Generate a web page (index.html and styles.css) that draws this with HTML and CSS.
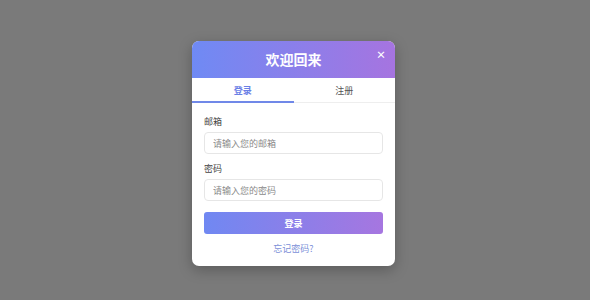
FILE: index.html
```html
<html lang="zh-CN">
<head>
    <meta charset="UTF-8">
    <meta name="viewport" content="width=device-width, initial-scale=1.0">
    <title>登录</title>
    <link rel="stylesheet" href="styles.css">
</head>
<body>
    <div class="mask">
        <div class="modal">
            <div class="modal-head">
                <h2>欢迎回来</h2>
                <span class="close">×</span>
            </div>
            <ul class="tabs">
                <li class="active">登录</li>
                <li>注册</li>
            </ul>
            <div class="modal-body">
                <div class="field">
                    <label>邮箱</label>
                    <input type="text" placeholder="请输入您的邮箱">
                </div>
                <div class="field">
                    <label>密码</label>
                    <input type="password" placeholder="请输入您的密码">
                </div>
                <button class="submit">登录</button>
                <a class="forgot" href="#">忘记密码?</a>
            </div>
        </div>
    </div>
</body>
</html>
```
FILE: styles.css
```css
* {
    margin: 0;
    padding: 0;
    box-sizing: border-box;
    list-style: none;
    text-decoration: none;
}

body {
    font-family: "Noto Sans CJK SC", "Noto Sans", sans-serif;
    background: #7a7a7a;
}

.mask {
    height: 300px;
    display: flex;
    align-items: center;
    justify-content: center;
    padding: 7px 3px 0 0;
}

.modal {
    width: 203px;
    background: #fff;
    border-radius: 7px;
    overflow: hidden;
    box-shadow: 0 4px 14px rgba(0, 0, 0, 0.25);
}

.modal-head {
    height: 37px;
    position: relative;
    display: flex;
    align-items: center;
    justify-content: center;
    background: linear-gradient(90deg, #6f8af4, #a674e0);
}

.modal-head h2 {
    color: #fff;
    font-size: 14px;
    font-weight: 700;
    margin-top: -2px;
}

.close {
    position: absolute;
    right: 9px;
    top: 8px;
    color: #fff;
    font-size: 10px;
    font-weight: 700;
    line-height: 12px;
}

.tabs {
    display: flex;
    border-bottom: 1px solid #eee;
}

.tabs li {
    flex: 1;
    height: 25px;
    line-height: 25px;
    text-align: center;
    font-size: 9px;
    color: #555;
    border-bottom: 2px solid transparent;
    margin-bottom: -1px;
}

.tabs li.active {
    color: #6a80e6;
    font-weight: 700;
    border-bottom-color: #7088e8;
}

.modal-body {
    padding: 13px 12px 11px 12px;
    display: flex;
    flex-direction: column;
}

.field {
    margin-bottom: 9px;
}

.field label {
    display: block;
    font-size: 9px;
    line-height: 12px;
    color: #444;
    margin-bottom: 4px;
}

.field input {
    width: 100%;
    height: 22px;
    border: 1px solid #e6e6e6;
    border-radius: 4px;
    padding: 0 8px;
    font-family: inherit;
    font-size: 9px;
    outline: none;
}

.field input::placeholder {
    color: #8a8a8a;
}

.submit {
    margin-top: 2px;
    height: 22px;
    border: none;
    border-radius: 3px;
    background: linear-gradient(90deg, #7088f2, #a676e0);
    color: #fff;
    font-family: inherit;
    font-size: 9px;
    font-weight: 700;
}

.forgot {
    margin-top: 9px;
    text-align: center;
    font-size: 9px;
    line-height: 12px;
    color: #7c90d8;
}
```
